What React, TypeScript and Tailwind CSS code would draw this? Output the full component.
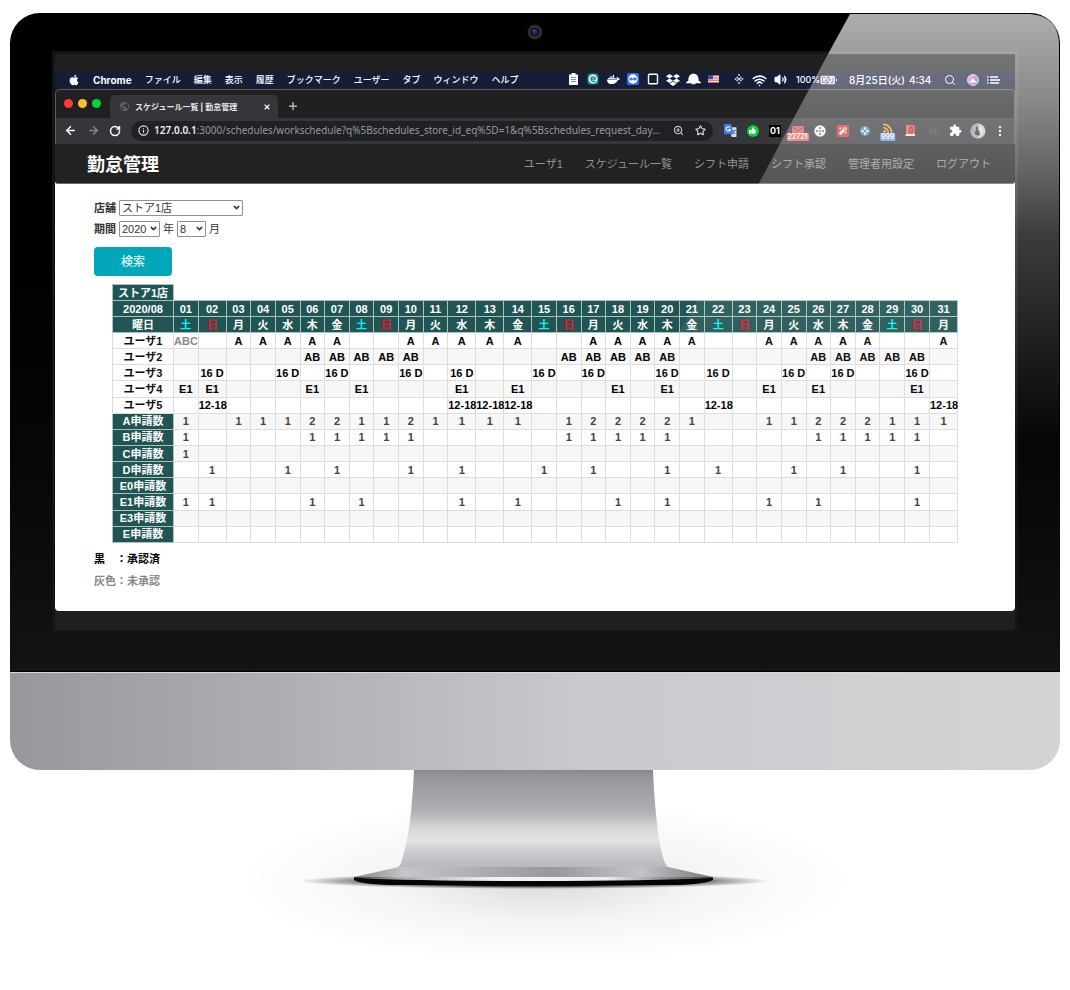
import React from "react";
import { ArrowLeft, ArrowRight, RotateCw, Info, Plus, X, ZoomIn, Star, ChevronDown, Search, Wifi, Volume2 } from "lucide-react";
import { FaApple, FaDocker, FaDropbox, FaThumbsUp, FaMagic } from "react-icons/fa";
import { MdExtension, MdRssFeed, MdPublic } from "react-icons/md";

const MENUS = ["ファイル", "編集", "表示", "履歴", "ブックマーク", "ユーザー", "タブ", "ウィンドウ", "ヘルプ"];
const LINKS = ["ユーザ1", "スケジュール一覧", "シフト申請", "シフト承認", "管理者用設定", "ログアウト"];
const DAYS = Array.from({ length: 31 }, (_, i) => i + 1);
const WEEK = ["金", "土", "日", "月", "火", "水", "木"];
const WIDE_DAYS = [2, 12, 13, 14, 22, 31];

const D_DAYS = [2, 5, 7, 10, 12, 15, 17, 20, 22, 25, 27, 30];
const E1_DAYS = [1, 2, 6, 8, 12, 14, 18, 20, 24, 26, 30];
const A_DAYS = [3, 4, 5, 6, 7, 10, 11, 12, 13, 14, 17, 18, 19, 20, 21, 24, 25, 26, 27, 28, 31];
const AB_DAYS = [6, 7, 8, 9, 10, 16, 17, 18, 19, 20, 26, 27, 28, 29, 30];
const DOUBLE_DAYS = [6, 7, 10, 17, 18, 19, 20, 26, 27, 28];

type Row = { label: string; cell: (day: number) => string };

const USERS: Row[] = [
  { label: "ユーザ1", cell: (d) => (d === 1 ? "ABC" : A_DAYS.includes(d) ? "A" : "") },
  { label: "ユーザ2", cell: (d) => (AB_DAYS.includes(d) ? "AB" : "") },
  { label: "ユーザ3", cell: (d) => (D_DAYS.includes(d) ? "16 D" : "") },
  { label: "ユーザ4", cell: (d) => (E1_DAYS.includes(d) ? "E1" : "") },
  { label: "ユーザ5", cell: (d) => (WIDE_DAYS.includes(d) ? "12-18" : "") },
];

const COUNTS: Row[] = [
  { label: "A申請数", cell: (d) => ([2, 15, 22, 23].includes(d) ? "" : DOUBLE_DAYS.includes(d) ? "2" : "1") },
  { label: "B申請数", cell: (d) => (d === 1 || AB_DAYS.includes(d) ? "1" : "") },
  { label: "C申請数", cell: (d) => (d === 1 ? "1" : "") },
  { label: "D申請数", cell: (d) => (D_DAYS.includes(d) ? "1" : "") },
  { label: "E0申請数", cell: () => "" },
  { label: "E1申請数", cell: (d) => (E1_DAYS.includes(d) ? "1" : "") },
  { label: "E3申請数", cell: () => "" },
  { label: "E申請数", cell: () => "" },
];

function weekdayClass(day: number) {
  const w = WEEK[day % 7];
  if (w === "土") return "text-[#00f5f5]";
  if (w === "日") return "text-[#f01030]";
  return "text-white";
}

function MenuBar() {
  return (
    <div className="flex h-4 items-center bg-[#161d38] pl-[13px] pr-[15px] font-[Inter,'Noto_Sans_CJK_JP',sans-serif] text-[9px] leading-4 font-medium whitespace-nowrap text-white">
      <FaApple className="size-3" />
      <span className="ml-[13px] text-[10px] font-bold">Chrome</span>
      <div className="ml-[13px] flex gap-[13px]">
        {MENUS.map((m) => (
          <span key={m}>{m}</span>
        ))}
      </div>
      <div className="ml-auto flex items-center">
        <div className="flex [&>*]:flex [&>*]:w-5 [&>*]:justify-center">
          <span>
            <svg viewBox="0 0 11 12" className="h-3 w-[11px]">
              <path d="M1 1.5h2.5V0h4v1.5H10V12H1z" fill="#fff" />
              <path d="M3 4.5h5M3 6.5h5M3 8.5h5" stroke="#6b7080" strokeWidth=".8" />
            </svg>
          </span>
          <span>
            <svg viewBox="0 0 12 12" className="size-3">
              <rect x=".5" y=".5" width="11" height="11" rx="3.5" fill="#129c8e" />
              <circle cx="6" cy="6" r="4.4" fill="#fff" />
              <path d="M4 6.1h4.200C8.200 3.200 4 3.200 4 6.100c0 2.700 2.700 2.700 3.900 1.600" fill="none" stroke="#0f7a70" strokeWidth="1.200" />
            </svg>
          </span>
          <span><FaDocker className="size-[13px]" /></span>
          <span>
            <svg viewBox="0 0 12 12" className="size-3">
              <rect width="12" height="12" rx="1.500" fill="#2470ef" />
              <circle cx="6" cy="6" r="4.700" fill="#fff" />
              <path d="M1.800 6 4.500 3.900v1.300h3V3.900L10.200 6 7.500 8.100V6.800h-3v1.300z" fill="#2470ef" />
            </svg>
          </span>
          <span>
            <svg viewBox="0 0 12 12" className="size-3">
              <rect x="1.500" y="1.200" width="9" height="9.600" rx="1" fill="none" stroke="#fff" strokeWidth="1.400" />
            </svg>
          </span>
          <span>
            <FaDropbox className="size-[14px]" />
          </span>
          <span>
            <svg viewBox="0 0 15 12" className="h-3 w-[15px]">
              <path d="M2.300 8C2.300 3 4 .8 7.500 .8S12.700 3 12.700 8c1.400.4 2.300 1.100 2.300 2.200H0C0 9.100.9 8.400 2.300 8z" fill="#fff" />
              <rect x="5.500" y="9.500" width="4" height="1.800" rx=".9" fill="#fff" />
            </svg>
          </span>
          <span>
            <svg viewBox="0 0 11 8" className="mt-[2px] h-2 w-[11px]">
              <rect width="11" height="8" fill="#f4eeee" />
              <path d="M0 .6h11M0 2.900h11M0 5.200h11M0 7.400h11" stroke="#d94848" />
              <rect width="5" height="4.200" fill="#3a4f9a" />
            </svg>
          </span>
        </div>
        <div className="ml-[5px] flex [&>*]:flex [&>*]:w-[21px] [&>*]:justify-center">
          <span>
            <svg viewBox="0 0 10 12" className="h-3 w-[10px]" fill="#c9ccd6">
              <circle cx="5" cy="2" r="1" /><circle cx="5" cy="10" r="1" /><circle cx="1.500" cy="6" r=".9" />
              <circle cx="3.200" cy="4.500" r=".9" /><circle cx="6.800" cy="4.500" r=".9" /><circle cx="8.500" cy="6" r=".9" />
              <circle cx="3.200" cy="7.500" r=".9" /><circle cx="6.800" cy="7.500" r=".9" /><circle cx="5" cy="6" r="1.300" />
            </svg>
          </span>
          <span><Wifi className="size-[15px]" strokeWidth={2.5} /></span>
          <span><Volume2 className="size-[13px]" fill="#fff" /></span>
        </div>
        <span className="ml-[5px] w-6">100%</span>
        <svg viewBox="0 0 18 10" className="h-[10px] w-[18px]">
          <rect x=".5" y=".7" width="14.500" height="8.600" rx="1.500" fill="#e8e8e8" />
          <path d="M16 3.500c1.500 0 1.500 3 0 3z" fill="#e8e8e8" />
          <path d="M2.500 2.500h3M2.500 7.500h3M2.500 2.500v5M13 2.500v5M10.500 7.500H13" stroke="#555866" strokeWidth=".9" fill="none" />
          <path d="M9 1 5 5.700h2.500L6.500 9l4.300-4.800H8.300z" fill="#fff" stroke="#555866" strokeWidth=".9" />
        </svg>
        <span className="ml-[11px] w-[60px] text-[10px]">8月25日(火)</span>
        <span className="w-6 text-[10px]">4:34</span>
        <Search className="ml-[11px] size-3" strokeWidth={2} />
        <svg viewBox="0 0 12 12" className="ml-[11px] size-3">
          <defs>
            <linearGradient id="orb" x1="0" y1="0" x2="1" y2="1">
              <stop offset="0" stopColor="#8dd0ff" />
              <stop offset=".4" stopColor="#e76fc8" />
              <stop offset=".65" stopColor="#7f5fe0" />
              <stop offset="1" stopColor="#57dfd0" />
            </linearGradient>
          </defs>
          <circle cx="6" cy="6" r="5.400" fill="url(#orb)" stroke="#dcdce4" strokeWidth="1" />
          <path d="M2 8c2 .2 2.600-3.400 4-3.400S8 8 10 8c-2 1-6 1-8 0z" fill="#fff" />
        </svg>
        <svg viewBox="0 0 13 10" className="ml-[8px] h-[10px] w-[13px]" stroke="#fff" strokeWidth="1.500">
          <path d="M0 2h1.500M3 2h8M0 5h1.500M3 5h10M0 8h1.500M3 8h9" />
        </svg>
      </div>
    </div>
  );
}

function CountBadge({ children, tone }: { children: string; tone: string }) {
  return (
    <span className={`absolute top-2 left-1/2 -translate-x-1/2 rounded-[1px] px-px text-[7px] leading-[8px] font-semibold text-white ${tone}`}>
      {children}
    </span>
  );
}

function Extensions() {
  return (
    <div className="ml-[7px] flex w-[290px] shrink-0 items-center justify-between [&>*]:flex [&>*]:w-5 [&>*]:justify-center">
      <span>
        <svg viewBox="0 0 12 12" className="size-[13px]">
          <path d="M5 3h6.500v9H7z" fill="#d9dde4" />
          <path d="M0 0h6.500L9 9.500H0z" fill="#3f7ce8" />
          <path d="M5.600 3.300a2 2 0 1 0 .3 1.900H4.200" fill="none" stroke="#fff" />
          <path d="M8.500 6h2.500M9.700 5.500c0 2-.8 3-1.700 3.500M8.700 7c.4 1 1.200 1.700 2 2" stroke="#667" strokeWidth=".7" fill="none" />
        </svg>
      </span>
      <span>
        <span className="flex size-3 items-center justify-center rounded-full bg-[#0bcb3b]"><FaThumbsUp className="size-[7px] text-white" /></span>
      </span>
      <span>
        <span className="bg-black px-px text-[9px] leading-3 font-bold text-white">01</span>
      </span>
      <span className="relative h-3">
        <svg viewBox="0 0 12 10" className="h-[10px] w-3">
          <path d="M0 1h12v9H0z" fill="#e05a55" />
          <path d="m0 2 6 4 6-4" stroke="#8a3a3a" fill="none" />
        </svg>
        <CountBadge tone="bg-[#ee5f5a]">22721</CountBadge>
      </span>
      <span>
        <svg viewBox="0 0 12 12" className="size-3">
          <circle cx="6" cy="6" r="5.700" fill="#f4f4f4" />
          <circle cx="6" cy="3" r="1" fill="#555" /><circle cx="6" cy="9" r="1" fill="#555" />
          <circle cx="3" cy="6" r="1" fill="#555" /><circle cx="9" cy="6" r="1" fill="#555" />
          <path d="M6 5v2M5 6h2" stroke="#555" strokeWidth=".8" />
        </svg>
      </span>
      <span>
        <span className="flex size-3 items-center justify-center bg-[#d33430]"><FaMagic className="size-2 text-white" /></span>
      </span>
      <span>
        <svg viewBox="0 0 12 12" className="size-3">
          <circle cx="6" cy="6" r="5" fill="#3c88ae" />
          <path d="M6 1.500 7.500 4.500h-3zM6 10.500 7.500 7.500h-3zM1.500 6 4.500 4.500v3zM10.500 6 7.500 4.500v3z" fill="#fff" />
        </svg>
      </span>
      <span className="relative h-3">
        <MdRssFeed className="size-[14px] -translate-y-1 text-[#f6a821]" />
        <CountBadge tone="bg-[#5c96ee]">999</CountBadge>
      </span>
      <span>
        <svg viewBox="0 0 11 12" className="h-3 w-[11px]">
          <path d="M1 0h9v10H1z" fill="#e2403c" />
          <path d="M0 10 2 9h8v2H1z" fill="#f0e6d8" />
          <path d="M2.200 0v9.500" stroke="#f2a090" strokeWidth=".8" />
          <path d="M6.200 1.800c2.500 3 1.500 5.200 0 5.200s-2.500-2.200 0-5.200z" fill="none" stroke="#7c1f22" strokeWidth=".8" />
        </svg>
      </span>
      <span>
        <svg viewBox="0 0 12 12" className="size-3">
          <path d="M1 .5l3 2.500h4l3-2.500V8l-2.500 3h-5L1 8z" fill="#3b3d40" />
          <path d="m3 6 2 1M9 6 7 7" stroke="#6a6c6f" strokeWidth=".8" />
        </svg>
      </span>
      <span><MdExtension className="size-[13px] text-white" /></span>
      <span>
        <svg viewBox="0 0 16 16" className="size-4 shrink-0">
          <circle cx="8" cy="8" r="7.500" fill="#c4c5c7" />
          <path d="M8 .5a7.500 7.500 0 0 0 0 15z" fill="#9a9ca0" />
          <path d="M6 4.500 8 3l.3 4.500c3 1 2.700 4.500 0 5-3.500.4-4.500-3.500-2.300-5z" fill="#35373b" />
          <path d="M9 3l4 2-1 7-2 0z" fill="#dcdddf" />
        </svg>
      </span>
      <span>
        <svg viewBox="0 0 4 12" className="h-3 w-1" fill="#f0f0f0">
          <circle cx="2" cy="2" r="1.200" /><circle cx="2" cy="6" r="1.200" /><circle cx="2" cy="10" r="1.200" />
        </svg>
      </span>
    </div>
  );
}

function BrowserChrome() {
  return (
    <div className="mt-px rounded-t-[5px] border border-b-0 border-[#5c5c5c] bg-[#202022] font-[Inter,'Noto_Sans_CJK_JP',sans-serif]">
      <div className="flex h-7 items-end pl-2">
        <div className="flex gap-[5px] pb-[10px]">
          <span className="size-[9px] rounded-full bg-[#fc3a3f]" />
          <span className="size-[9px] rounded-full bg-[#fdbc2e]" />
          <span className="size-[9px] rounded-full bg-[#06d335]" />
        </div>
        <div className="ml-[9px] flex h-[23px] w-[168px] items-center rounded-t-[5px] bg-[#35363a] pl-[9px] pr-[7px]">
          <MdPublic className="size-[11px] text-[#606266]" />
          <span className="ml-[5px] flex-1 text-[8px] font-bold whitespace-nowrap text-[#e6e6e8]">スケジュール一覧 | 勤怠管理</span>
          <button aria-label="タブを閉じる" className="text-white"><X className="size-2" strokeWidth={3.5} /></button>
        </div>
        <button aria-label="新しいタブ" className="mb-[6px] ml-[9px] text-[#d0d0d2]"><Plus className="size-3" strokeWidth={2.5} /></button>
      </div>
      <div className="flex h-[26px] items-center bg-[#35363a] pr-1 pb-px pl-2">
        <button aria-label="戻る" className="text-white"><ArrowLeft className="size-[13px]" strokeWidth={2.8} /></button>
        <button aria-label="進む" className="ml-[10px] text-[#85868a]"><ArrowRight className="size-[13px]" strokeWidth={2.5} /></button>
        <button aria-label="再読み込み" className="ml-[9px] text-white"><RotateCw className="size-3" strokeWidth={3} /></button>
        <div className="ml-[10px] flex h-5 min-w-0 flex-1 items-center rounded-full bg-[#202124] pr-[7px] pl-[7px]">
          <Info className="size-[11px] shrink-0 text-[#e4e4e6]" strokeWidth={2.5} />
          <span className="ml-[5px] font-['Noto_Sans',sans-serif] text-[10px] whitespace-nowrap text-[#96989c]">
            <span className="font-semibold text-[#f0f0f2]">127.0.0.1</span>
            :3000/schedules/workschedule?q%5Bschedules_store_id_eq%5D=1&amp;q%5Bschedules_request_day...
          </span>
          <ZoomIn className="ml-auto size-[11px] shrink-0 text-[#c4c5c8]" strokeWidth={2.5} />
          <Star className="ml-[11px] size-[11px] shrink-0 text-[#d8d8da]" strokeWidth={2.5} />
        </div>
        <Extensions />
      </div>
    </div>
  );
}

function Picker({ id, label, value, width }: { id: string; label: string; value: string; width: string }) {
  return (
    <span className={`relative inline-flex ${width}`}>
      <select
        id={id}
        aria-label={label}
        defaultValue={value}
        className="h-4 w-full appearance-none rounded-[1px] border border-[#8f9096] bg-white pl-[2px] text-[11px] leading-[14px] text-[#333]"
      >
        <option>{value}</option>
      </select>
      <ChevronDown className="pointer-events-none absolute top-[3px] right-[2px] size-[9px] text-[#333]" strokeWidth={4} />
    </span>
  );
}

function ScheduleTable() {
  const head = "border border-[#a9c2c0] bg-[#205553] p-0 font-bold text-white";
  const cell = "border border-[#dddddd] p-0";
  return (
    <table className="h-[259px] w-full table-fixed border-collapse text-center text-[11px] leading-[14px] font-bold whitespace-nowrap">
      <colgroup>
        <col className="w-[61px]" />
        {DAYS.map((d) => (
          <col key={d} className={WIDE_DAYS.includes(d) ? "w-[28px]" : undefined} />
        ))}
      </colgroup>
      <thead>
        <tr className="h-4">
          <th className={head}>ストア1店</th>
        </tr>
        <tr className="h-4">
          <th className={head}>2020/08</th>
          {DAYS.map((d) => (
            <th key={d} className={head}>{String(d).padStart(2, "0")}</th>
          ))}
        </tr>
        <tr className="h-4">
          <th className={head}>曜日</th>
          {DAYS.map((d) => (
            <th key={d} className="border border-[#a9c2c0] bg-[#205553] p-0">
              <span className={weekdayClass(d)}>{WEEK[d % 7]}</span>
            </th>
          ))}
        </tr>
      </thead>
      <tbody className="text-[#111]">
        {USERS.map((row) => (
          <tr key={row.label} className="even:bg-[#f7f7f7]">
            <th className="border border-[#dddddd] bg-white p-0">{row.label}</th>
            {DAYS.map((d) => {
              const text = row.cell(d);
              return (
                <td key={d} className={cell}>
                  <span className={text === "ABC" ? "text-[#8a8a8a]" : "text-black"}>{text}</span>
                </td>
              );
            })}
          </tr>
        ))}
      </tbody>
      <tbody className="text-[#444]">
        {COUNTS.map((row) => (
          <tr key={row.label} className="odd:bg-[#f7f7f7]">
            <th className={head}>{row.label}</th>
            {DAYS.map((d) => (
              <td key={d} className={cell}>{row.cell(d)}</td>
            ))}
          </tr>
        ))}
      </tbody>
    </table>
  );
}

function Site() {
  return (
    <div className="bg-white font-['Liberation_Sans','Noto_Sans_CJK_JP',sans-serif]">
      <header className="flex h-10 items-center justify-between rounded-b-[3px] border-b border-[#6a6a6a] bg-[#222] pt-[2px] pr-6 pl-8">
        <h1 className="text-[18px] leading-6 font-bold text-white">勤怠管理</h1>
        <nav className="flex gap-[22px] text-[11px] whitespace-nowrap text-[#929292]">
          {LINKS.map((l) => (
            <a key={l} href="#">{l}</a>
          ))}
        </nav>
      </header>
      <main className="text-[11px] text-[#333]">
        <form className="flex flex-col items-start px-[39px] pt-4" onSubmit={(e) => e.preventDefault()}>
          <div className="flex h-4 items-center gap-[3px]">
            <label htmlFor="store" className="font-bold">店舗</label>
            <Picker id="store" label="店舗" value="ストア1店" width="w-[124px]" />
          </div>
          <div className="mt-[5px] flex h-4 items-center gap-[3px]">
            <label htmlFor="year" className="font-bold">期間</label>
            <Picker id="year" label="年" value="2020" width="w-[41px]" />
            <span>年</span>
            <Picker id="month" label="月" value="8" width="w-[29px]" />
            <span>月</span>
          </div>
          <button type="submit" className="mt-[10px] h-[29px] rounded-[4px] bg-[#02a8ba] px-[27px] text-[12px] text-white">検索</button>
        </form>
        <div className="mt-2 px-[57px]">
          <ScheduleTable />
        </div>
        <div className="px-[39px] pt-2 pb-[22px] leading-4 font-bold">
          <p className="text-black">黒　：承認済</p>
          <p className="mt-[6px] text-[#868686]">灰色：未承認</p>
        </div>
      </main>
    </div>
  );
}

function Glare() {
  return (
    <svg viewBox="0 0 1050 658" preserveAspectRatio="none" className="pointer-events-none absolute inset-0 h-full w-full">
      <defs>
        <linearGradient id="bezelGlare" gradientUnits="userSpaceOnUse" x1="0" y1="0" x2="0" y2="430">
          <stop offset="0" stopColor="#fff" stopOpacity=".68" />
          <stop offset=".2" stopColor="#fff" stopOpacity=".54" />
          <stop offset=".36" stopColor="#fff" stopOpacity=".4" />
          <stop offset=".52" stopColor="#fff" stopOpacity=".23" />
          <stop offset=".75" stopColor="#fff" stopOpacity=".12" />
          <stop offset="1" stopColor="#fff" stopOpacity="0" />
        </linearGradient>
        <linearGradient id="glassGlare" gradientUnits="userSpaceOnUse" x1="0" y1="41" x2="0" y2="430">
          <stop offset="0" stopColor="#fff" stopOpacity=".38" />
          <stop offset=".3" stopColor="#fff" stopOpacity=".25" />
          <stop offset=".65" stopColor="#fff" stopOpacity=".08" />
          <stop offset="1" stopColor="#fff" stopOpacity="0" />
        </linearGradient>
      </defs>
      <path d="M840 1H1020Q1049 3 1049 32V430H1005V41H818z" fill="url(#bezelGlare)" />
      <path d="M818 41H1005V430H610z" fill="url(#glassGlare)" />
    </svg>
  );
}

function Stand() {
  return (
    <svg viewBox="0 0 1050 215" className="block w-full">
      <defs>
        <linearGradient id="neck" x1="0" y1="0" x2="0" y2="1">
          <stop offset="0" stopColor="#88898c" />
          <stop offset=".06" stopColor="#949598" />
          <stop offset=".42" stopColor="#b0b1b5" />
          <stop offset=".58" stopColor="#d5d7d8" />
          <stop offset=".7" stopColor="#e3e5e5" />
          <stop offset=".8" stopColor="#cdced2" />
          <stop offset="1" stopColor="#b5b6ba" />
        </linearGradient>
        <linearGradient id="foot" x1="0" y1="0" x2="1" y2="0">
          <stop offset="0" stopColor="#86878a" />
          <stop offset=".14" stopColor="#c4c5c8" />
          <stop offset=".35" stopColor="#adaeb1" />
          <stop offset=".55" stopColor="#98999c" />
          <stop offset=".8" stopColor="#c2c3c6" />
          <stop offset="1" stopColor="#77787b" />
        </linearGradient>
        <linearGradient id="rim" x1="0" y1="0" x2="1" y2="0">
          <stop offset="0" stopColor="#333" />
          <stop offset=".12" stopColor="#aaa" />
          <stop offset=".4" stopColor="#f4f4f4" />
          <stop offset=".7" stopColor="#eee" />
          <stop offset="1" stopColor="#444" />
        </linearGradient>
        <radialGradient id="haze">
          <stop offset="0" stopColor="#000" stopOpacity=".14" />
          <stop offset=".5" stopColor="#000" stopOpacity=".04" />
          <stop offset="1" stopColor="#000" stopOpacity="0" />
        </radialGradient>
        <radialGradient id="contact">
          <stop offset=".6" stopColor="#000" stopOpacity=".95" />
          <stop offset=".78" stopColor="#000" stopOpacity=".4" />
          <stop offset="1" stopColor="#000" stopOpacity="0" />
        </radialGradient>
      </defs>
      <ellipse cx="535" cy="112" rx="310" ry="82" fill="url(#haze)" />
      <ellipse cx="524" cy="111" rx="235" ry="8" fill="url(#contact)" />
      <path d="M404 0H643C645 44 649 78 655 93Q657 98 664 100H383Q389 98 391 93C398 72 402 44 404 0z" fill="url(#neck)" />
      <path d="M389 97H658L703 107V110H344V107z" fill="url(#foot)" />
      <path d="M344 108H703V110Q692 115 660 115H390Q352 115 344 110z" fill="#060606" />
      <path d="M344 107H703V108Q640 111 524 111T344 108z" fill="url(#rim)" />
    </svg>
  );
}

export default function App() {
  return (
    <div className="min-h-screen overflow-hidden bg-white px-[10px] pt-[13px]">
      <div className="overflow-hidden rounded-[30px]">
        <div className="relative border-b border-black bg-linear-to-b from-black to-[#131313] px-[42px] pt-[11px] pb-[38px]">
          <div className="flex h-[27px] justify-center">
            <svg viewBox="0 0 16 16" className="size-4">
              <circle cx="8" cy="8" r="7.500" fill="#29292b" />
              <circle cx="8" cy="8" r="5" fill="#111216" stroke="#3b3b3e" />
              <circle cx="8" cy="8" r="2.400" fill="#263a94" />
              <circle cx="8.500" cy="8" r="1" fill="#0c1022" />
              <circle cx="7" cy="6.800" r=".7" fill="#7894ea" />
            </svg>
          </div>
          <div className="border-[3px] border-[#141414] bg-[#1f1f1f] pt-[18px] pb-[19px]">
            <MenuBar />
            <div className="overflow-hidden rounded-b-[4px]">
              <BrowserChrome />
              <Site />
            </div>
          </div>
          <Glare />
        </div>
        <div className="h-[98px] border-t border-[#d6d7d9] bg-linear-to-r from-[#97989b] via-[#c9cacd] via-55% to-[#d3d4d6]" />
      </div>
      <Stand />
    </div>
  );
}
